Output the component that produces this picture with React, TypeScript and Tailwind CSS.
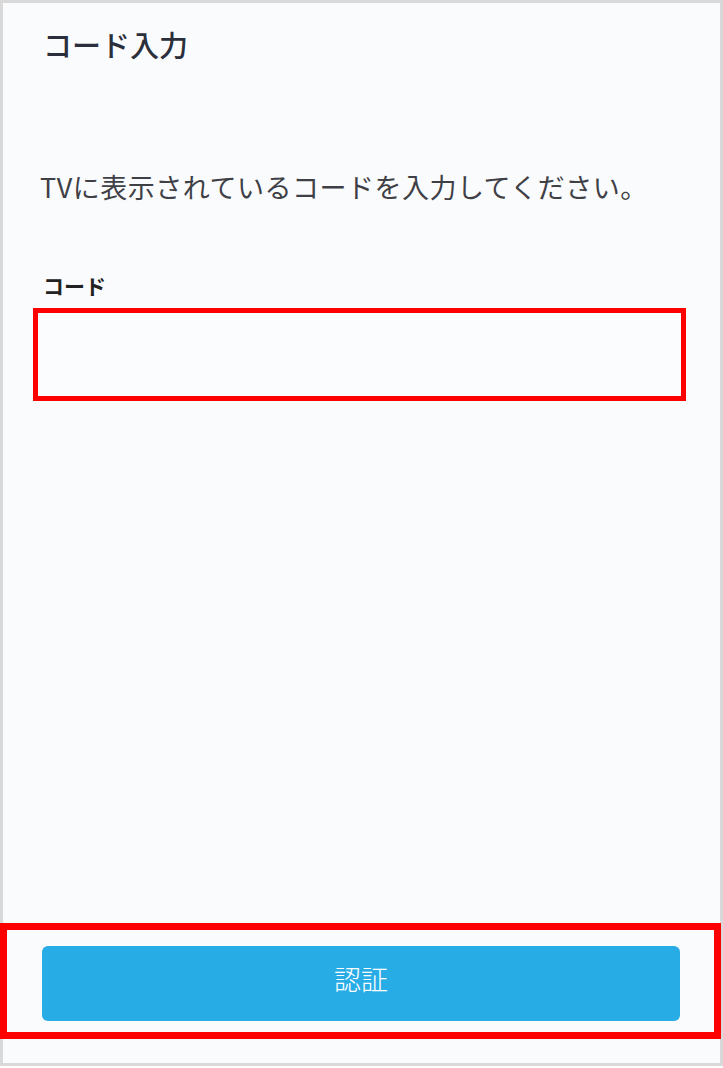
export default function App() {
  return (
    <div
      className="w-[723px] h-[1066px] flex flex-col border-[3px] border-[#d9d9d9] bg-[#fafbfd]"
      style={{ fontFamily: '"Noto Sans CJK JP", "Noto Sans", sans-serif' }}
    >
      <div className="px-[30px] pt-[21px]">
        <h1 className="pl-[10px] text-[29px] leading-[40px] font-medium text-[#2b2f3b]">コード入力</h1>
        <p className="pl-[7px] mt-[105px] text-[27px] leading-[36px] text-[#3f3f46] tracking-[0.5px]">
          TVに表示されているコードを入力してください。
        </p>
        <label className="block pl-[10px] mt-[65px] text-[21px] leading-[30px] font-bold text-[#222]">コード</label>
        <div className="mt-[8px] w-[653px] h-[93px] border-[5px] border-[#ff0000] bg-[#fbfcfe]">
          <input className="w-full h-full bg-transparent outline-none" aria-label="コード" />
        </div>
      </div>

      <div className="flex-1" />

      <div className="ml-[-3px] w-[721px] mb-[24px] border-[7px] border-[#ff0000] pt-[16px] pb-[11px] pl-[35px] pr-[34px]">
        <button className="w-full h-[75px] pb-[8px] rounded-[6px] bg-[#27ace5] text-white text-[27px] font-light">
          認証
        </button>
      </div>
    </div>
  )
}
